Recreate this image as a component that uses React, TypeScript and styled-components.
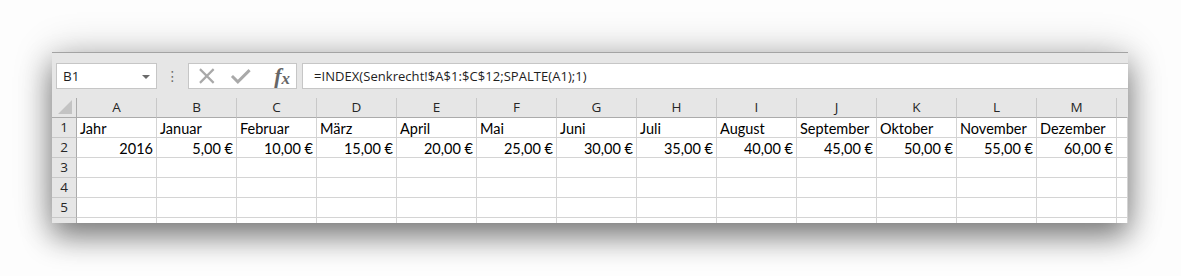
import styled, { createGlobalStyle } from 'styled-components';

const GlobalStyle = createGlobalStyle`
  html, body {
    margin: 0;
    padding: 0;
    background: #fdfdfd;
  }
`;

const columns = ['A', 'B', 'C', 'D', 'E', 'F', 'G', 'H', 'I', 'J', 'K', 'L', 'M'];
const months = [
  'Jahr', 'Januar', 'Februar', 'März', 'April', 'Mai', 'Juni', 'Juli',
  'August', 'September', 'Oktober', 'November', 'Dezember',
];
const values = [
  '2016', '5,00 €', '10,00 €', '15,00 €', '20,00 €', '25,00 €', '30,00 €',
  '35,00 €', '40,00 €', '45,00 €', '50,00 €', '55,00 €', '60,00 €',
];

const App = () => {
  return (
    <>
      <GlobalStyle />
      <Page>
        <Window>
          <FormulaBar>
            <NameBox>
              <span>B1</span>
              <Caret />
            </NameBox>
            <Dots>⋮</Dots>
            <FnBox>
              <svg width="20" height="20" viewBox="0 0 20 20">
                <path d="M3 3 L17 17 M17 3 L3 17" stroke="#a9a9a9" strokeWidth="2.2" fill="none" />
              </svg>
              <svg width="22" height="20" viewBox="0 0 22 20">
                <path d="M2 10 L8 16 L20 4" stroke="#a9a9a9" strokeWidth="3" fill="none" />
              </svg>
              <Fx>
                f<sub>x</sub>
              </Fx>
            </FnBox>
            <FormulaInput>=INDEX(Senkrecht!$A$1:$C$12;SPALTE(A1);1)</FormulaInput>
          </FormulaBar>

          <Grid>
            <Corner>
              <CornerTriangle />
            </Corner>
            {columns.map((c) => (
              <ColHeader key={c}>{c}</ColHeader>
            ))}
            <ColHeader $last />

            <RowHeader>1</RowHeader>
            {months.map((m) => (
              <Cell key={m}>{m}</Cell>
            ))}
            <Cell />

            <RowHeader>2</RowHeader>
            {values.map((v) => (
              <Cell key={v} $right>
                {v}
              </Cell>
            ))}
            <Cell />

            {[3, 4, 5, 6].map((r) => (
              <Row key={r}>
                <RowHeader>{r === 6 ? '' : r}</RowHeader>
                {columns.map((c) => (
                  <Cell key={c} />
                ))}
                <Cell />
              </Row>
            ))}
          </Grid>
        </Window>
      </Page>
    </>
  );
};

export default App;

const Page = styled.div`
  width: 1181px;
  height: 276px;
  padding: 52px 0 0 52px;
  box-sizing: border-box;
`;

const Window = styled.div`
  width: 1076px;
  height: 171px;
  overflow: hidden;
  background: #ffffff;
  border-top: 1px solid #a3a3a3;
  box-sizing: border-box;
  box-shadow: 0 14px 28px rgba(0, 0, 0, 0.45), 0 0 38px rgba(0, 0, 0, 0.2);
`;

const FormulaBar = styled.div`
  height: 45px;
  background: #e6e6e6;
  display: flex;
  align-items: flex-start;
  padding-top: 10px;
  box-sizing: border-box;
`;

const NameBox = styled.div`
  margin-left: 4px;
  width: 101px;
  height: 26px;
  box-sizing: border-box;
  background: #ffffff;
  border: 1px solid #c6c6c6;
  display: flex;
  align-items: center;
  justify-content: space-between;
  padding: 0 6px 0 6px;
  font-family: 'Open Sans', sans-serif;
  font-size: 13.5px;
  color: #1e1e1e;
`;

const Caret = styled.span`
  width: 0;
  height: 0;
  border-left: 4px solid transparent;
  border-right: 4px solid transparent;
  border-top: 4px solid #6a6a6a;
  margin-top: 1px;
`;

const Dots = styled.span`
  width: 31px;
  text-align: center;
  font-family: 'DejaVu Sans', sans-serif;
  font-size: 14px;
  line-height: 26px;
  color: #6e6e6e;
`;

const FnBox = styled.div`
  width: 109px;
  height: 26px;
  box-sizing: border-box;
  background: #ffffff;
  border: 1px solid #c6c6c6;
  display: flex;
  align-items: center;
  padding: 0 6px 0 8px;
  gap: 13px;
`;

const Fx = styled.span`
  margin-left: 10px;
  font-family: 'Liberation Serif', serif;
  font-style: italic;
  font-weight: bold;
  font-size: 22px;
  color: #666666;
  line-height: 1;

  sub {
    font-size: 17px;
    vertical-align: -1px;
  }
`;

const FormulaInput = styled.div`
  margin-left: 5px;
  flex: 1;
  height: 26px;
  box-sizing: border-box;
  background: #ffffff;
  border: 1px solid #c6c6c6;
  border-right: none;
  padding-left: 11px;
  font-family: 'Open Sans', sans-serif;
  font-size: 13px;
  letter-spacing: 0.05px;
  line-height: 24px;
  color: #1e1e1e;
`;

const Grid = styled.div`
  display: grid;
  grid-template-columns: 25px repeat(13, 80px) 11px;
  grid-auto-rows: 20px;
  background: #e6e6e6;
`;

const Row = styled.div`
  display: contents;
`;

const Corner = styled.div`
  background: #e6e6e6;
  border-right: 1px solid #ababab;
  border-bottom: 1px solid #ababab;
  box-sizing: border-box;
  position: relative;
`;

const CornerTriangle = styled.div`
  position: absolute;
  right: 4px;
  bottom: 3px;
  width: 0;
  height: 0;
  border-left: 14px solid transparent;
  border-bottom: 14px solid #c3c3c3;
`;

const ColHeader = styled.div<{ $last?: boolean }>`
  background: #e6e6e6;
  border-right: 1px solid ${(p) => (p.$last ? 'transparent' : '#c8c8c8')};
  border-bottom: 1px solid #ababab;
  box-sizing: border-box;
  text-align: center;
  font-family: 'Open Sans', sans-serif;
  font-size: 13.5px;
  line-height: 19px;
  color: #262626;
`;

const RowHeader = styled.div`
  background: #e6e6e6;
  border-right: 1px solid #ababab;
  border-bottom: 1px solid #c8c8c8;
  box-sizing: border-box;
  text-align: center;
  font-family: 'Open Sans', sans-serif;
  font-size: 13.5px;
  line-height: 19px;
  color: #262626;
`;

const Cell = styled.div<{ $right?: boolean }>`
  background: #ffffff;
  border-right: 1px solid #d4d4d4;
  border-bottom: 1px solid #d4d4d4;
  box-sizing: border-box;
  padding: 0 3px;
  text-align: ${(p) => (p.$right ? 'right' : 'left')};
  white-space: nowrap;
  overflow: hidden;
  font-family: Lato, 'Liberation Sans', sans-serif;
  font-size: 14.5px;
  line-height: 21px;
  color: #000000;
`;
